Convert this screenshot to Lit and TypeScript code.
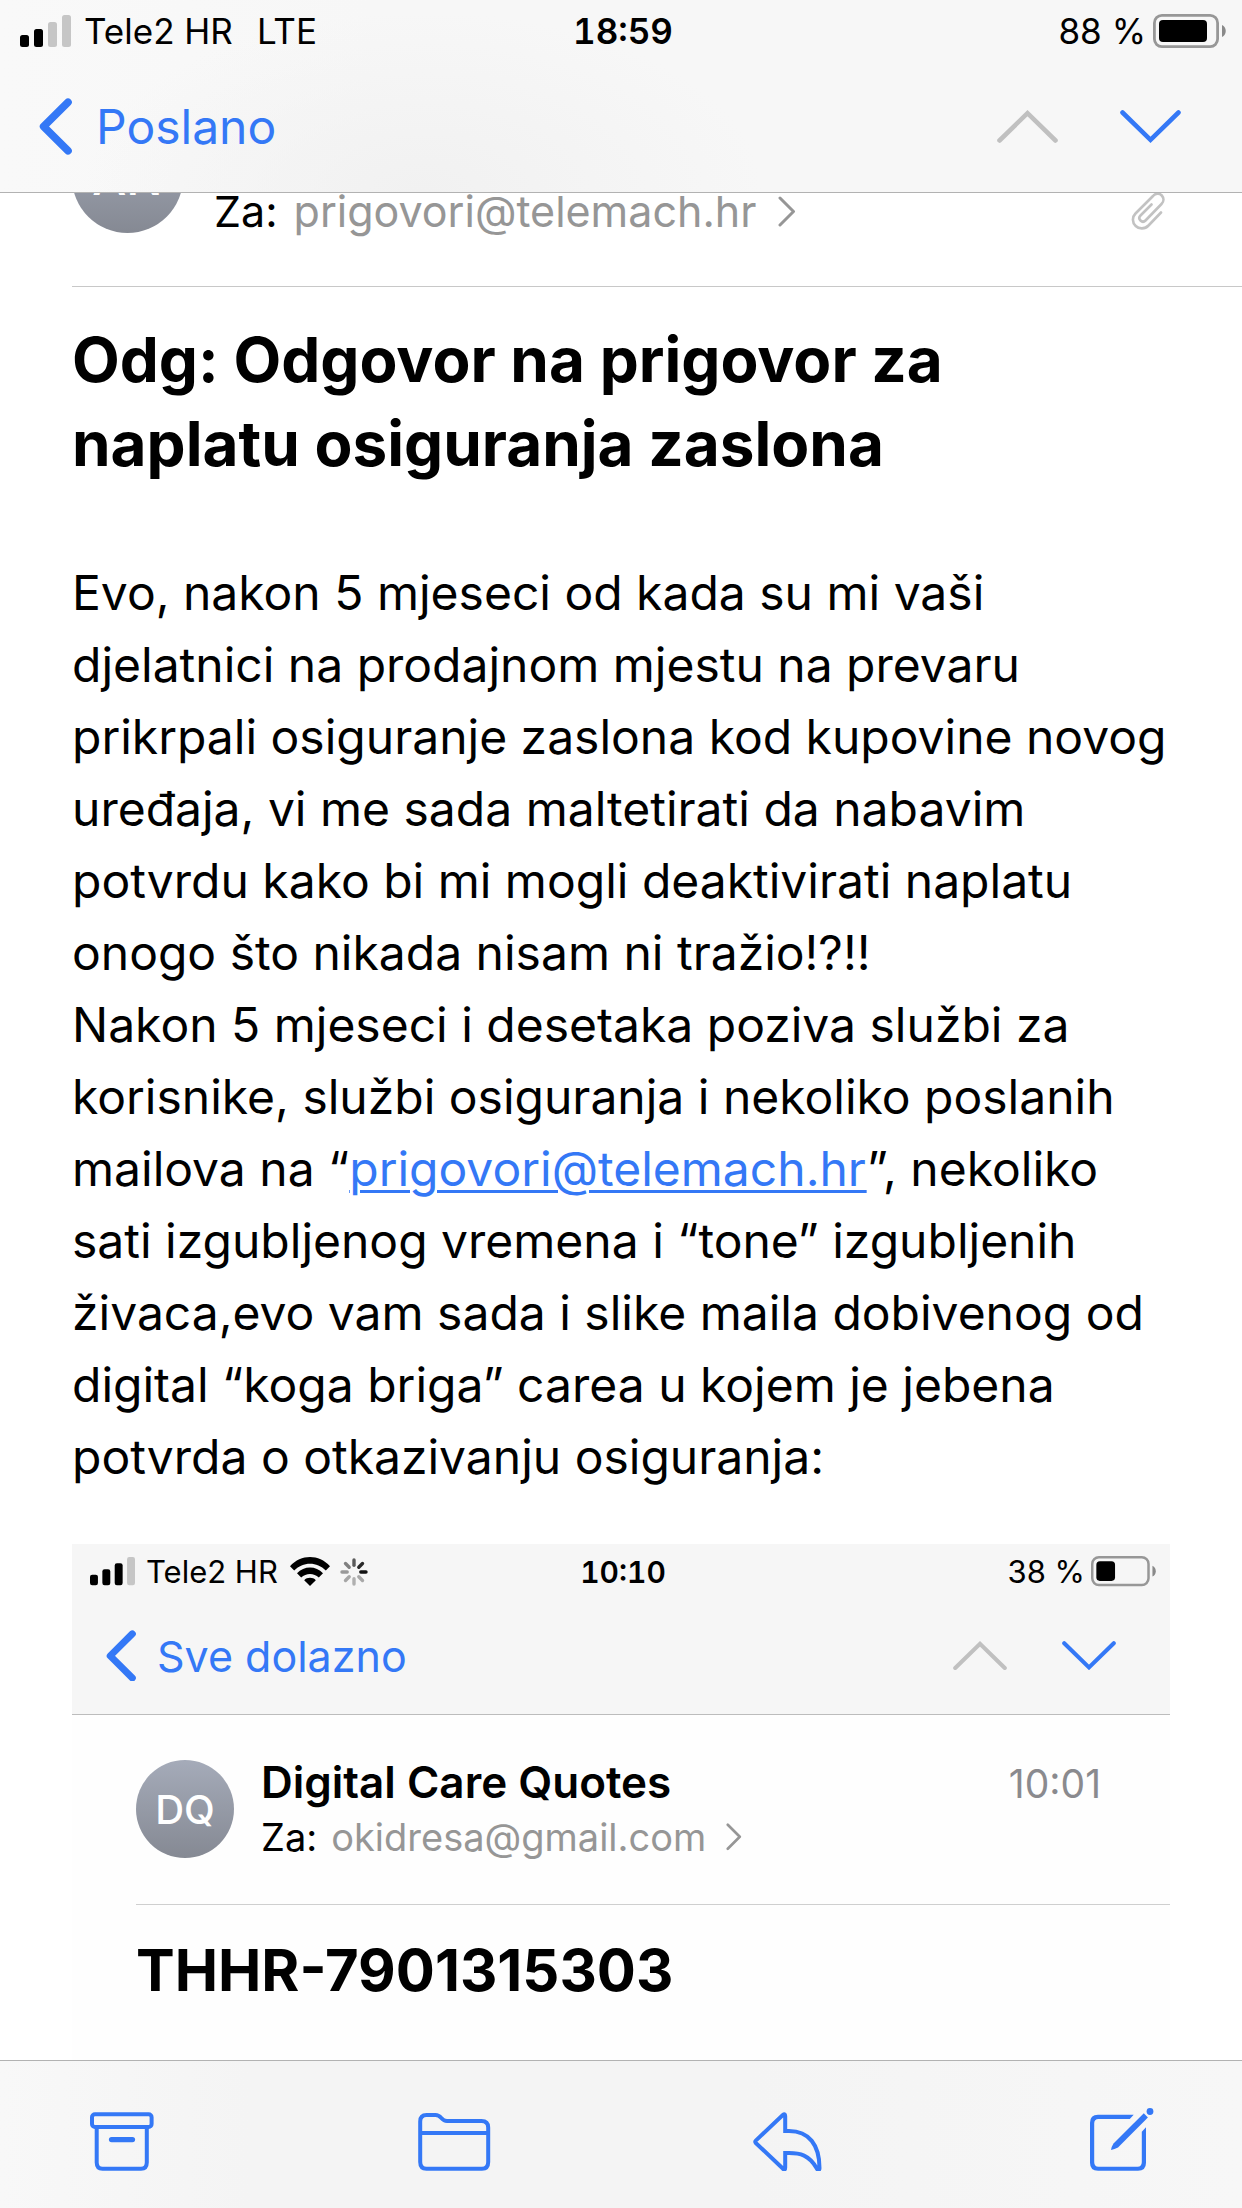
import { LitElement, html, css, svg } from "lit";
import { customElement, property } from "lit/decorators.js";

const chevronBack = html`<svg class="icon back-icon" viewBox="0 0 33 57" aria-hidden="true">
  <path d="M29 4.2 4.6 28.5 29 52.8" fill="none" stroke="currentColor" stroke-width="7.6" stroke-linecap="round" stroke-linejoin="round" />
</svg>`;

const chevronUp = html`<svg class="icon step-icon" viewBox="0 0 61 33" aria-hidden="true">
  <path d="M2.5 30.5 30.5 3.2 58.5 30.5" fill="none" stroke="currentColor" stroke-width="4.6" stroke-linecap="round" />
</svg>`;

const chevronDown = html`<svg class="icon step-icon" viewBox="0 0 61 33" aria-hidden="true">
  <path d="M2.5 2.5 30.5 29.8 58.5 2.5" fill="none" stroke="currentColor" stroke-width="4.6" stroke-linecap="round" />
</svg>`;

const chevronMore = html`<svg class="icon more-icon" viewBox="0 0 18 31" aria-hidden="true">
  <path d="M2 2 15.5 15.5 2 29" fill="none" stroke="currentColor" stroke-width="3" stroke-linecap="round" stroke-linejoin="round" />
</svg>`;

const paperclip = html`<svg class="icon clip" viewBox="0 0 34 38" role="img" aria-label="Privitak">
  <path d="M30 20.5 17.5 33.5C14 37.3 8 37.3 4.7 34 1 30.5 1 25 4.5 21.5L22 4C24.5 1 28.5 1 30.8 3.5 33 6 33 9.5 30.5 12L14.5 28.5C13 30 11 30 9.5 28.5 8 27 8 25 9.5 23.5L20.5 12.5" fill="none" stroke="currentColor" stroke-width="2.6" stroke-linecap="round" />
</svg>`;

const wifi = html`<svg class="icon wifi" viewBox="0 0 40 29" role="img" aria-label="Wi-Fi">
  <path d="M0 9.3C11-3 29-3 40 9.3L35.8 13.5C27 4.5 13 4.5 4.2 13.5Z" />
  <path d="M7 16.2C14 8.5 26 8.5 33 16.2L28.8 20.4C24 15.7 16 15.7 11.2 20.4Z" />
  <path d="M14.2 23.2C17 20 23 20 25.8 23.2L20 29Z" />
</svg>`;

const spokes = ["#5b5b5b", "#2a2a2a", "#111", "#a8a8a8", "#b0b0b0", "#a6a6a6", "#999", "#808080"];

const spinner = html`<svg class="icon spinner" viewBox="-14 -14 28 28" role="img" aria-label="Učitavanje">
  ${spokes.map(
    (tone, i) => svg`<line x1="0" y1="-12" x2="0" y2="-6.8" stroke=${tone} stroke-width="3.4" stroke-linecap="round" transform=${`rotate(${i * 45})`} />`
  )}
</svg>`;

const shared = css`
  * {
    box-sizing: border-box;
  }
  .icon {
    display: block;
    flex: none;
  }
  button {
    font: inherit;
    color: #3478f6;
    background: none;
    border: 0;
    padding: 0;
    margin: 0;
    display: flex;
    align-items: center;
    cursor: pointer;
  }
  button:disabled {
    color: #c0c0c0;
    cursor: default;
  }
`;

/** Status strip and navigation row that head a mail screen. */
@customElement("mail-head")
export class MailHead extends LitElement {
  @property() carrier = "";
  @property() network = "";
  @property() time = "";
  @property() back = "";
  @property({ type: Number }) signal = 0;
  @property({ type: Number }) charge = 0;
  @property({ type: Boolean }) loading = false;

  static styles = [
    shared,
    css`
      :host {
        display: block;
        --status-height: 62px;
        --status-size: 35px;
        --time-size: 35px;
        --nav-height: 130px;
        --nav-size: 48px;
        --nav-left: 39px;
        --nav-right: 61px;
        --back-width: 33px;
        --back-gap: 24px;
        --step-width: 61px;
        --step-gap: 62px;
        --side-left: 20px;
        --side-right: 16px;
        --bars-width: 51px;
        --bars-gap: 13px;
        --battery-width: 73px;
        --battery-gap: 7px;
        background: radial-gradient(ellipse 340px 180px at 34% 100%, #f1f1f1, #f7f7f700), linear-gradient(90deg, #f9f9f9, #f7f7f7 30%);
        border-bottom: 1px solid #b2b2b2;
      }
      :host([compact]) {
        --status-height: 55px;
        --status-size: 31px;
        --time-size: 30px;
        --nav-height: 115px;
        --nav-size: 43px;
        --nav-left: 34px;
        --nav-right: 54px;
        --back-width: 30px;
        --back-gap: 21px;
        --step-width: 54px;
        --step-gap: 55px;
        --side-left: 18px;
        --side-right: 14px;
        --bars-width: 45px;
        --bars-gap: 11px;
        --battery-width: 65px;
        --battery-gap: 6px;
        background: #f6f6f6;
        border-color: #bcbcbc;
      }
      .status {
        display: grid;
        grid-template-columns: 1fr auto 1fr;
        align-items: center;
        height: var(--status-height);
        padding: 0 var(--side-right) 0 var(--side-left);
        font-size: var(--status-size);
        white-space: nowrap;
      }
      .left,
      .right {
        display: flex;
        align-items: center;
      }
      .right {
        justify-content: flex-end;
        gap: var(--battery-gap);
      }
      .bars {
        width: var(--bars-width);
        margin-right: var(--bars-gap);
      }
      .network {
        margin-left: 24px;
      }
      .wifi {
        width: 40px;
        margin-left: 12px;
      }
      .spinner {
        width: 28px;
        margin-left: 10px;
      }
      .time {
        font-size: var(--time-size);
        font-weight: 600;
        font-variant-numeric: tabular-nums;
      }
      .battery {
        width: var(--battery-width);
      }
      .nav {
        display: flex;
        align-items: center;
        justify-content: space-between;
        height: var(--nav-height);
        padding: 0 var(--nav-right) 2px var(--nav-left);
        font-size: var(--nav-size);
      }
      .back {
        gap: var(--back-gap);
      }
      .back-icon {
        width: var(--back-width);
      }
      .steps {
        display: flex;
        gap: var(--step-gap);
      }
      .step-icon {
        width: var(--step-width);
      }
    `,
  ];

  render() {
    const heights = [12, 18, 25, 32];
    return html`
      <div class="status">
        <div class="left">
          <svg class="icon bars" viewBox="0 0 51 32" role="img" aria-label="Signal">
            ${heights.map(
              (h, i) => svg`<rect x=${i * 14} y=${32 - h} width="9" height=${h} rx="2.5" fill=${i < this.signal ? "#000" : "#c6c6c6"} />`
            )}
          </svg>
          <span>${this.carrier}</span>
          ${this.network ? html`<span class="network">${this.network}</span>` : ""}
          ${this.loading ? html`${wifi}${spinner}` : ""}
        </div>
        <span class="time">${this.time}</span>
        <div class="right">
          <span>${this.charge} %</span>
          <svg class="icon battery" viewBox="0 0 73 34" role="img" aria-label="Baterija">
            <rect x="1.4" y="1.4" width="63.2" height="31.2" rx="7.5" fill="none" stroke="#979797" stroke-width="2.8" />
            <rect x="6" y="6" width=${Math.round(this.charge * 0.54)} height="22" rx="4" />
            <path d="M69 11C74 13 74 21 69 23Z" fill="#8a8a8a" />
          </svg>
        </div>
      </div>
      <nav class="nav">
        <button class="back" type="button">${chevronBack}<span>${this.back}</span></button>
        <div class="steps">
          <button type="button" disabled aria-label="Prethodna poruka">${chevronUp}</button>
          <button type="button" aria-label="Sljedeća poruka">${chevronDown}</button>
        </div>
      </nav>
    `;
  }
}

/** Bottom toolbar with the message actions. */
@customElement("mail-toolbar")
export class MailToolbar extends LitElement {
  static styles = [
    shared,
    css`
      :host {
        display: flex;
        justify-content: space-between;
        align-items: flex-end;
        padding: 47px 88px 37px 90px;
        background: linear-gradient(90deg, #f8f8f8, #f4f4f4 20%, #f4f4f4 60%, #f7f7f7);
        border-top: 1px solid #b2b2b2;
      }
      .icon {
        fill: none;
        stroke: currentColor;
        stroke-width: 4;
      }
      .solid {
        fill: currentColor;
        stroke: none;
      }
    `,
  ];

  render() {
    return html`
      <button type="button" aria-label="Arhiviraj">
        <svg class="icon" width="64" height="59" viewBox="0 0 64 59" aria-hidden="true">
          <rect x="2" y="2.3" width="59.6" height="12.6" rx="3" />
          <path d="M6.7 15V50.5Q6.7 56.7 12.5 56.7H51Q56.8 56.7 56.8 50.5V15" />
          <path d="M21.5 27.6H42.5" stroke-width="5.2" stroke-linecap="round" />
        </svg>
      </button>
      <button type="button" aria-label="Premjesti">
        <svg class="icon" width="74" height="59" viewBox="-1 0 74 59" aria-hidden="true">
          <path d="M2.2 50V9.5Q2.2 3 8.5 3H17.5C20.5 3 21.5 4 23.3 6 25 8 26 9 29 9H63.5Q70.2 9 70.2 15.5V50Q70.2 56.7 64 56.7H8.5Q2.2 56.7 2.2 50ZM2.2 21H70.2" />
        </svg>
      </button>
      <button type="button" aria-label="Odgovori">
        <svg class="icon" width="74" height="60" viewBox="0 0 74 60" aria-hidden="true">
          <path d="M29.8 4Q32.2 2 32.2 5V20H36C56 20 66.5 34 66.5 57 66.5 59.5 64.5 59.5 63.5 57 56 44 47 42 36 42H32.2V56.5Q32.2 60 29.8 57.5L2.8 32Q1.6 30.8 2.8 29.6Z" />
        </svg>
      </button>
      <button type="button" aria-label="Nova poruka">
        <svg class="icon" width="64" height="63" viewBox="0 0 64 63" aria-hidden="true">
          <path class="solid" d="M43.7 6.7H8Q0 6.7 0 14.7V54.7Q0 62.7 8 62.7H48Q56 62.7 56 54.7V19.3L51.8 23.7V54Q51.8 58.7 47.5 58.7H8.5Q4.2 58.7 4.2 54V15.5Q4.2 11 8.5 11H39.8Z" />
          <path class="solid" d="M21 42Q21.5 38.5 23.5 35.5L53.8 5.3 57.9 9.6 28 39.6Q24.5 41.5 21 42Z" />
          <circle class="solid" cx="60" cy="3.5" r="3.4" />
        </svg>
      </button>
    `;
  }
}

@customElement("app-root")
export class AppRoot extends LitElement {
  static styles = [
    shared,
    css`
      :host {
        display: flex;
        flex-direction: column;
        height: 100vh;
        overflow: hidden;
        background: #fff;
        color: #000;
        font-family: Inter, "Liberation Sans", sans-serif;
      }
      .top {
        z-index: 1;
        flex: none;
      }
      .bottom {
        flex: none;
      }
      .message {
        flex: 1;
        min-height: 0;
        overflow: hidden;
        padding-left: 72px;
      }
      .sender {
        display: flex;
        align-items: flex-end;
        margin-top: -71px;
        padding: 0 77px 49px 0;
        border-bottom: 1px solid #c8c8c8;
      }
      .avatar {
        flex: none;
        display: flex;
        align-items: center;
        justify-content: center;
        width: 111px;
        height: 111px;
        margin: 0 31px 4px 0;
        border-radius: 50%;
        background: linear-gradient(#a5abb9, #858993);
        color: #fff;
        font-size: 48px;
        font-weight: 500;
      }
      .recipient {
        flex: 1;
        display: flex;
        align-items: center;
        font-size: 43px;
        line-height: 52px;
        white-space: nowrap;
      }
      .address {
        margin: 0 22px 0 16px;
        color: #969696;
      }
      .more-icon {
        width: 18px;
        color: #969696;
      }
      .clip {
        width: 34px;
        margin-bottom: 7px;
        color: #c2c2c2;
      }
      h1,
      h2,
      h3,
      p {
        margin: 0;
      }
      .subject {
        padding-top: 31px;
        font-size: 62px;
        line-height: 84px;
        font-weight: 700;
      }
      .body {
        padding-top: 71px;
        font-size: 48px;
        line-height: 72px;
        white-space: nowrap;
      }
      .body a {
        color: #3478f6;
        text-decoration-thickness: 3px;
        text-underline-offset: 4px;
      }
      .attachment {
        margin: 51px 72px 0 0;
        background: #fefefe;
      }
      .attached-mail {
        padding-left: 64px;
      }
      .attached-sender {
        display: flex;
        align-items: center;
        padding: 39px 69px 40px 0;
        border-bottom: 1px solid #cfcfcf;
      }
      .attached-sender .avatar {
        width: 98px;
        height: 98px;
        margin: 0 27px 0 0;
        font-size: 40px;
      }
      .details {
        flex: 1;
      }
      .name-row {
        display: flex;
        justify-content: space-between;
        align-items: baseline;
        line-height: 56px;
      }
      .name {
        font-size: 44px;
        font-weight: 600;
      }
      .sent {
        font-size: 39px;
        line-height: 52px;
        color: #8a8a8e;
      }
      .details .recipient {
        font-size: 38px;
        line-height: 54px;
      }
      .details .address {
        margin: 0 20px 0 14px;
      }
      .details .more-icon {
        width: 16px;
      }
      .attached-subject {
        padding: 29px 0 120px;
        font-size: 58px;
        line-height: 72px;
        font-weight: 700;
      }
    `,
  ];

  render() {
    return html`
      <mail-head class="top" carrier="Tele2 HR" network="LTE" time="18:59" back="Poslano" signal="2" charge="88"></mail-head>
      <main class="message">
        <div class="sender">
          <div class="avatar">AN</div>
          <div class="recipient"><span>Za:</span><span class="address">prigovori@telemach.hr</span>${chevronMore}</div>
          ${paperclip}
        </div>
        <h1 class="subject">Odg: Odgovor na prigovor za<br />naplatu osiguranja zaslona</h1>
        <div class="body">
          <p>
            Evo, nakon 5 mjeseci od kada su mi vaši<br />
            djelatnici na prodajnom mjestu na prevaru<br />
            prikrpali osiguranje zaslona kod kupovine novog<br />
            uređaja, vi me sada maltetirati da nabavim<br />
            potvrdu kako bi mi mogli deaktivirati naplatu<br />
            onogo što nikada nisam ni tražio!?!!
          </p>
          <p>
            Nakon 5 mjeseci i desetaka poziva službi za<br />
            korisnike, službi osiguranja i nekoliko poslanih<br />
            mailova na “<a href="mailto:prigovori@telemach.hr">prigovori@telemach.hr</a>”, nekoliko<br />
            sati izgubljenog vremena i “tone” izgubljenih<br />
            živaca,evo vam sada i slike maila dobivenog od<br />
            digital “koga briga” carea u kojem je jebena<br />
            potvrda o otkazivanju osiguranja:
          </p>
        </div>
        <section class="attachment">
          <mail-head compact carrier="Tele2 HR" time="10:10" back="Sve dolazno" signal="3" charge="38" loading></mail-head>
          <div class="attached-mail">
            <div class="attached-sender">
              <div class="avatar">DQ</div>
              <div class="details">
                <div class="name-row"><h2 class="name">Digital Care Quotes</h2><span class="sent">10:01</span></div>
                <div class="recipient"><span>Za:</span><span class="address">okidresa@gmail.com</span>${chevronMore}</div>
              </div>
            </div>
            <h3 class="attached-subject">THHR-7901315303</h3>
          </div>
        </section>
      </main>
      <mail-toolbar class="bottom"></mail-toolbar>
    `;
  }
}
